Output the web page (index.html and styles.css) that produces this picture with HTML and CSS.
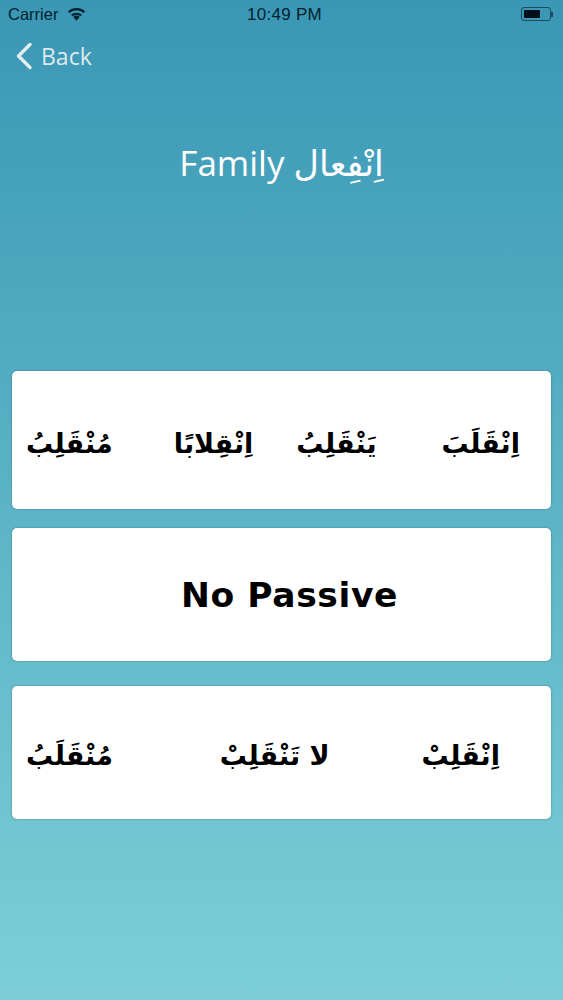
FILE: index.html
```html
<!DOCTYPE html>
<html lang="en">
<head>
<meta charset="utf-8">
<title>Family</title>
<link rel="stylesheet" href="styles.css">
</head>
<body>
<div class="screen">
  <div class="status">
    <div class="status-left">
      <span>Carrier</span>
      <svg class="wifi" viewBox="0 0 18 13" width="19" height="14"><path d="M9 13 5.900 9.400a4.600 4.600 0 0 1 6.200 0z" fill="#04222e"/><path d="M4.500 7.900a6.800 6.800 0 0 1 9 0" fill="none" stroke="#04222e" stroke-width="2"/><path d="M1.600 4.700a11 11 0 0 1 14.800 0" fill="none" stroke="#04222e" stroke-width="2"/></svg>
    </div>
    <div class="status-time">10:49 PM</div>
    <div class="status-right">
      <div class="battery"><div class="battery-level"></div></div>
      <div class="battery-tip"></div>
    </div>
  </div>
  <div class="nav">
    <svg class="chevron" viewBox="0 0 18 28" width="18" height="28"><path d="M15 2.500 3.500 14 15 25.500" fill="none" stroke="#e6eef0" stroke-width="3.400" stroke-linecap="round" stroke-linejoin="round"/></svg>
    <span class="back">Back</span>
  </div>
  <h1 class="title">Family <span dir="rtl" class="title-ar">اِنْفِعال</span></h1>
  <div class="cards">
    <div class="card card-a" dir="rtl">
      <span class="ar">اِنْقَلَبَ</span>
      <span class="ar">يَنْقَلِبُ</span>
      <span class="ar">اِنْقِلابًا</span>
      <span class="ar">مُنْقَلِبُ</span>
    </div>
    <div class="card card-b">No Passive</div>
    <div class="card card-c" dir="rtl">
      <span class="ar">اِنْقَلِبْ</span>
      <span class="ar">لا تَنْقَلِبْ</span>
      <span class="ar">مُنْقَلَبُ</span>
    </div>
  </div>
</div>
</body>
</html>
```
FILE: styles.css
```css
* { box-sizing: border-box; }
html, body { margin: 0; padding: 0; }
.screen {
  width: 563px;
  height: 1000px;
  overflow: hidden;
  background: linear-gradient(180deg, #3a97b5 0%, #7ccfd6 100%);
  font-family: "Inter", "Liberation Sans", sans-serif;
}
.status {
  height: 28px;
  padding: 0 10px 0 8px;
  display: flex;
  align-items: center;
  justify-content: space-between;
  color: #04222e;
  font-size: 16.500px;
  font-family: "Liberation Sans", sans-serif;
}
.status-left { display: flex; align-items: center; gap: 9px; width: 150px; }
.status-right { display: flex; align-items: center; justify-content: flex-end; width: 142px; }
.status-time { font-size: 17px; font-weight: 500; letter-spacing: .3px; padding-top: 1px; }
.battery {
  width: 30px;
  height: 14px;
  border: 1px solid #1c4c60;
  border-radius: 3px;
  padding: 2px;
}
.battery-level { width: 16px; height: 100%; background: #020f16; border-radius: 1px; }
.battery-tip { width: 2px; height: 5px; background: #1c4c60; }
.nav {
  height: 56px;
  padding-left: 15px;
  display: flex;
  align-items: center;
  gap: 8px;
  color: #dfeaee;
  font-size: 23px;
}
.back { font-family: "Open Sans", sans-serif; }
.title {
  margin: 56px 0 0;
  height: 46px;
  text-align: center;
  color: #fff;
  font-size: 35px;
  line-height: 46px;
  font-weight: 400;
  font-family: "Open Sans", "DejaVu Sans", sans-serif;
}
.title-ar { font-family: "DejaVu Sans", sans-serif; font-size: 35px; }
.cards {
  margin: 185px 12px 0;
  display: flex;
  flex-direction: column;
}
.card {
  background: #fff;
  border-radius: 5px;
  box-shadow: 0 0 2px rgba(40, 70, 80, .6);
  display: flex;
  align-items: center;
  color: #000;
}
.card-a {
  height: 138px;
  padding: 8px 31px 0 16px;
}
.card-a .ar:nth-child(1) { margin-left: 65px; }
.card-a .ar:nth-child(2) { margin-left: 43px; }
.card-a .ar:nth-child(3) { margin-left: 61px; }
.card-b {
  height: 133px;
  margin: 19px 0 25px;
  justify-content: center;
  padding-left: 16px;
  font-family: "DejaVu Sans", "Liberation Sans", sans-serif;
  font-weight: 700;
  font-size: 34.500px;
  letter-spacing: .6px;
}
.card-c {
  height: 133px;
  padding: 6px 51px 0 16px;
}
.card-c .ar:nth-child(1) { margin-left: 92px; }
.card-c .ar:nth-child(2) { margin-left: 107px; }
.ar {
  font-family: "DejaVu Sans", sans-serif;
  font-weight: 700;
  font-size: 27px;
  line-height: 60px;
  white-space: nowrap;
}
```
